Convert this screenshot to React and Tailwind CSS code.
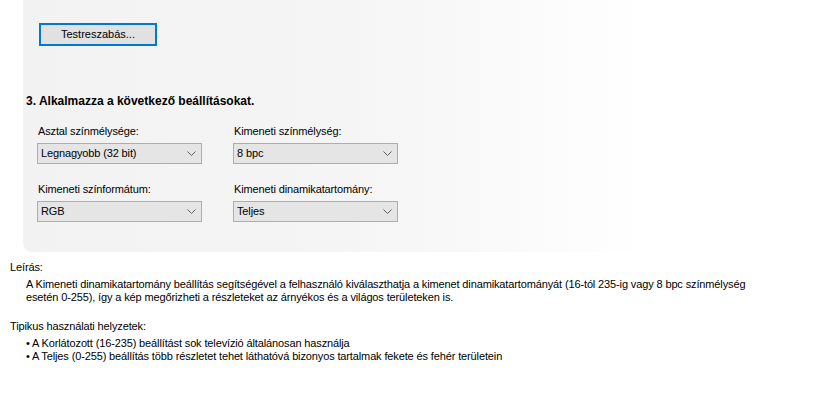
import React from "react";

function Chevron() {
  return (
    <svg width="9" height="5" viewBox="0 0 9 5" className="shrink-0">
      <path d="M0.5 0.5 L4.5 4.5 L8.5 0.5" fill="none" stroke="#5f5f5f" strokeWidth="1" />
    </svg>
  );
}

function Select({ value }) {
  return (
    <div className="flex h-[21px] w-[165px] items-center justify-between border border-[#adadad] bg-[#e5e5e5] pl-[3px] pr-[5px]">
      <span className="leading-[13px]">{value}</span>
      <Chevron />
    </div>
  );
}

function Field({ label, value }) {
  return (
    <div className="flex flex-col">
      <div className="h-[13px] pl-[1px] leading-[13px]">{label}</div>
      <div className="mt-[5px]">
        <Select value={value} />
      </div>
    </div>
  );
}

export default function App() {
  return (
    <div
      className="h-[413px] w-[827px] overflow-hidden bg-white text-[11px] leading-[13px] tracking-[-0.13px] text-black"
      style={{ fontFamily: '"Liberation Sans", Arial, sans-serif' }}
    >
      <div className="ml-[23px] h-[252px] rounded-bl-[9px] bg-[linear-gradient(to_right,#f2f2f2_0%,#f5f5f5_40%,#fafafa_60%,#ffffff_78%)] pt-[23px]">
        <button className="ml-[16px] flex h-[23px] w-[118px] items-center justify-center border-2 border-[#0078d7] bg-[#e1e1e1] leading-[13px] tracking-normal">
          Testreszabás...
        </button>
        <div className="ml-[3px] mt-[49px] h-[13px] text-[12px] font-bold leading-[13px] tracking-normal">
          3. Alkalmazza a következő beállításokat.
        </div>
        <div className="ml-[14px] mt-[17px] grid w-[361px] grid-cols-[196px_165px] gap-y-[19px]">
          <Field label="Asztal színmélysége:" value="Legnagyobb (32 bit)" />
          <Field label="Kimeneti színmélység:" value="8 bpc" />
          <Field label="Kimeneti színformátum:" value="RGB" />
          <Field label="Kimeneti dinamikatartomány:" value="Teljes" />
        </div>
      </div>
      <div className="ml-[10px] mt-[9px]">
        <div>Leírás:</div>
        <div className="ml-[16px] mt-[4px] whitespace-nowrap">
          <div>
            A Kimeneti dinamikatartomány beállítás segítségével a felhasználó kiválaszthatja a kimenet dinamikatartományát (16-tól 235-ig vagy 8 bpc színmélység
          </div>
          <div>esetén 0-255), így a kép megőrizheti a részleteket az árnyékos és a világos területeken is.</div>
        </div>
        <div className="mt-[16px]">Tipikus használati helyzetek:</div>
        <div className="ml-[16px] mt-[4px] whitespace-nowrap">
          <div>• A Korlátozott (16-235) beállítást sok televízió általánosan használja</div>
          <div>• A Teljes (0-255) beállítás több részletet tehet láthatóvá bizonyos tartalmak fekete és fehér területein</div>
        </div>
      </div>
    </div>
  );
}
